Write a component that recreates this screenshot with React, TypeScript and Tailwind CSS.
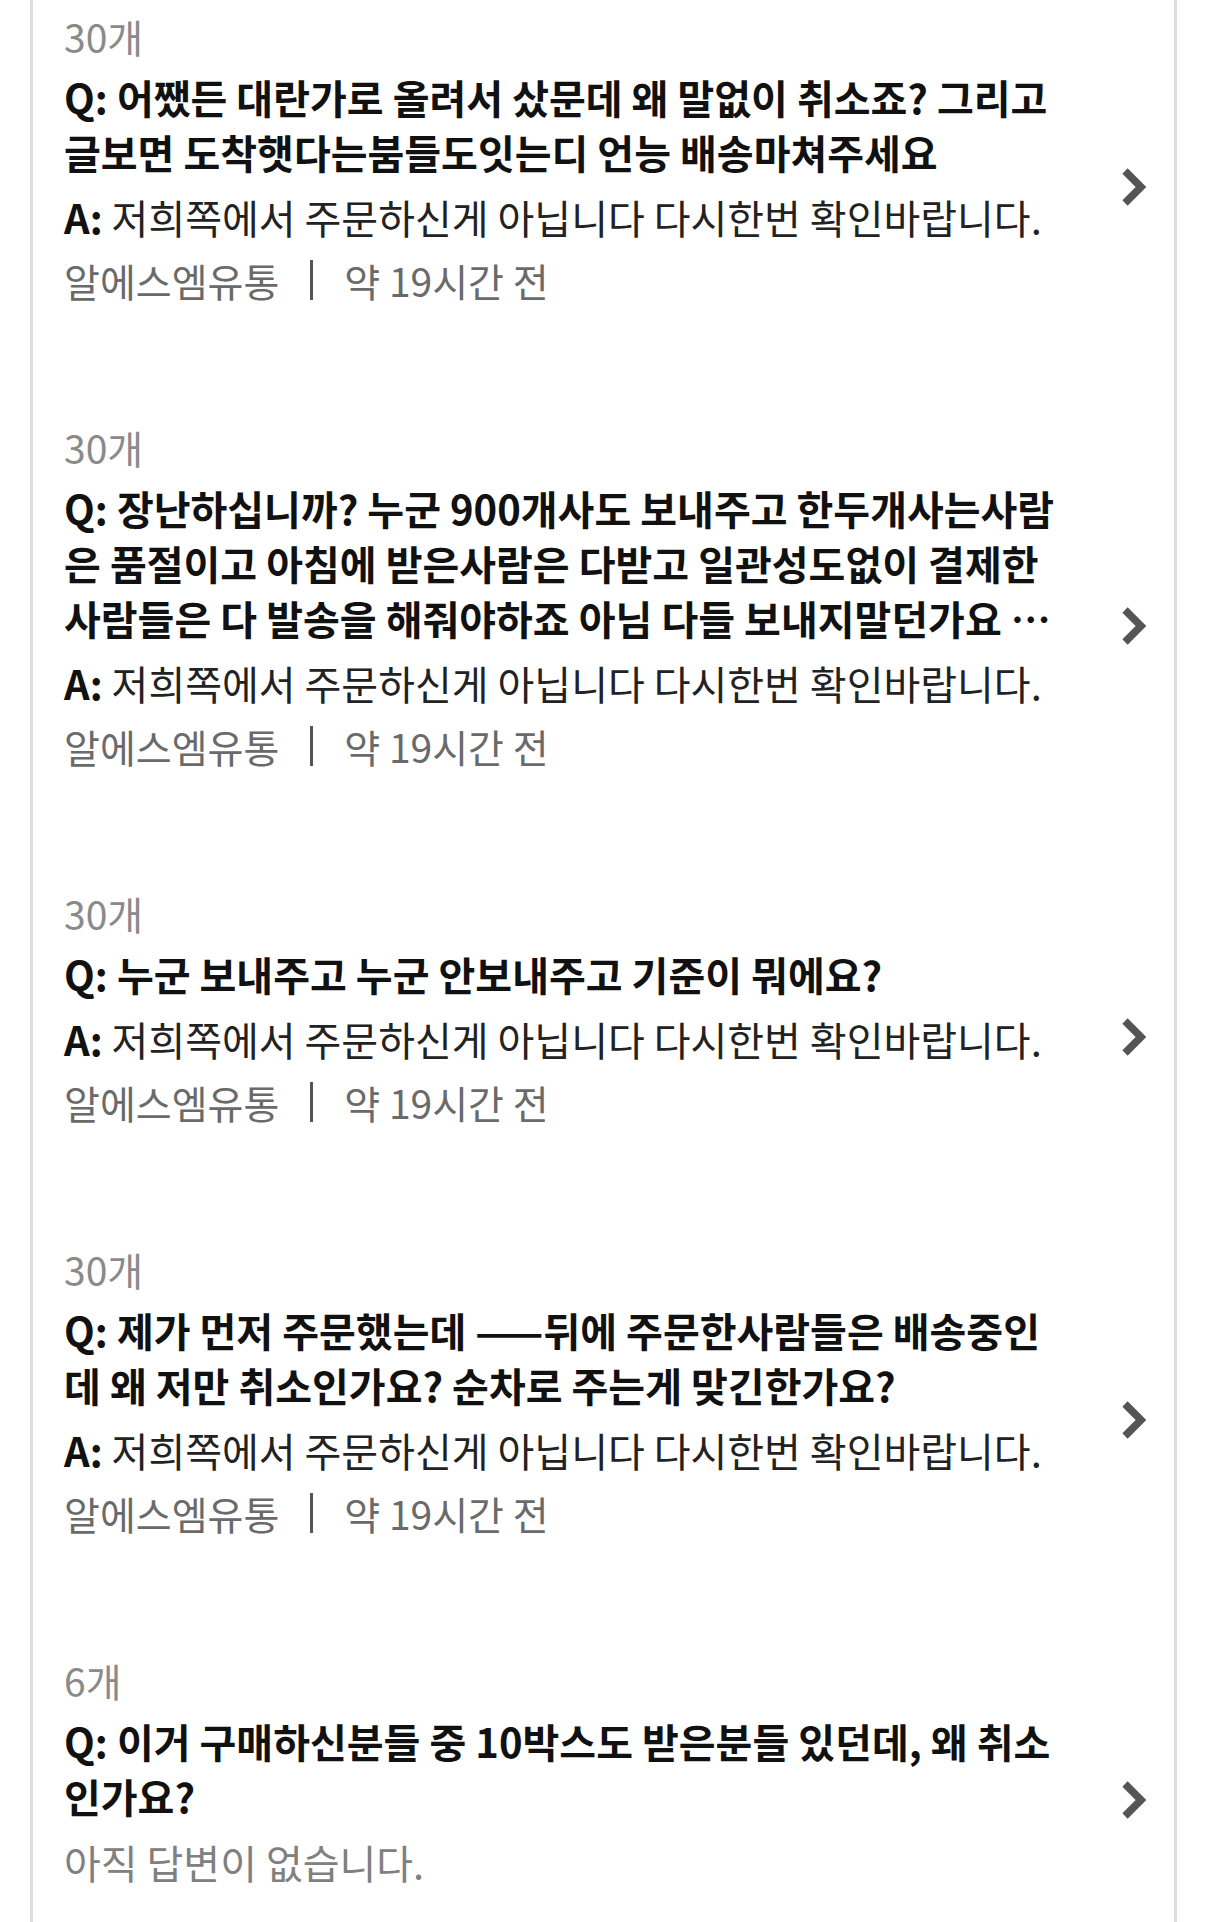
const items = [
  {
    count: "30개",
    q: "어쨌든 대란가로 올려서 샀문데 왜 말없이 취소죠? 그리고 글보면 도착햇다는붐들도잇는디 언능 배송마쳐주세요",
    a: "저희쪽에서 주문하신게 아닙니다 다시한번 확인바랍니다.",
  },
  {
    count: "30개",
    q: "장난하십니까? 누군 900개사도 보내주고 한두개사는사람은 품절이고 아침에 받은사람은 다받고 일관성도없이 결제한 사람들은 다 발송을 해줘야하죠 아님 다들 보내지말던가요 …",
    a: "저희쪽에서 주문하신게 아닙니다 다시한번 확인바랍니다.",
  },
  {
    count: "30개",
    q: "누군 보내주고 누군 안보내주고 기준이 뭐에요?",
    a: "저희쪽에서 주문하신게 아닙니다 다시한번 확인바랍니다.",
  },
  {
    count: "30개",
    q: "제가 먼저 주문했는데 ——뒤에 주문한사람들은 배송중인데 왜 저만 취소인가요? 순차로 주는게 맞긴한가요?",
    a: "저희쪽에서 주문하신게 아닙니다 다시한번 확인바랍니다.",
  },
  {
    count: "6개",
    q: "이거 구매하신분들 중 10박스도 받은분들 있던데, 왜 취소인가요?",
    a: null,
  },
];

function Chevron() {
  return (
    <svg width="27" height="38" viewBox="0 0 27 38" className="shrink-0">
      <polyline
        points="3,3 19,19 3,35"
        fill="none"
        stroke="#555"
        strokeWidth="7.5"
        strokeLinejoin="miter"
        strokeLinecap="butt"
      />
    </svg>
  );
}

export default function App() {
  return (
    <div
      className="h-[1922px] overflow-hidden bg-white"
      style={{ fontFamily: '"Noto Sans CJK KR", "Noto Sans", sans-serif' }}
    >
      <div className="ml-[30px] w-[1147px] h-full border-x-[3px] border-[#dddddd] pt-[14px]">
        <div className="flex flex-col gap-[121px]">
          {items.map((item, i) => (
            <div key={i} className="pl-[31px] pr-[25px]">
              <p className="text-[39px] leading-[44px] text-[#8a8a8a]">{item.count}</p>
              <div className="mt-3 flex items-center">
                <div className="w-[1006px]">
                  <p className="text-[40px] leading-[55px] font-bold text-[#111]">
                    Q: {item.q}
                  </p>
                  {item.a ? (
                    <>
                      <p className="mt-[13px] text-[40px] leading-[48px] text-[#222]">
                        <span className="font-bold text-[#111]">A:</span> {item.a}
                      </p>
                      <div className="mt-[15px] flex items-center text-[39px] leading-[48px] text-[#6a6a6a]">
                        <span>알에스엠유통</span>
                        <span className="mx-[31px] inline-block h-[40px] w-[3px] bg-[#555]" />
                        <span>약 19시간 전</span>
                      </div>
                    </>
                  ) : (
                    <p className="mt-[14px] text-[40px] leading-[48px] text-[#808080]">
                      아직 답변이 없습니다.
                    </p>
                  )}
                </div>
                <div className="ml-auto">
                  <Chevron />
                </div>
              </div>
            </div>
          ))}
        </div>
      </div>
    </div>
  );
}
